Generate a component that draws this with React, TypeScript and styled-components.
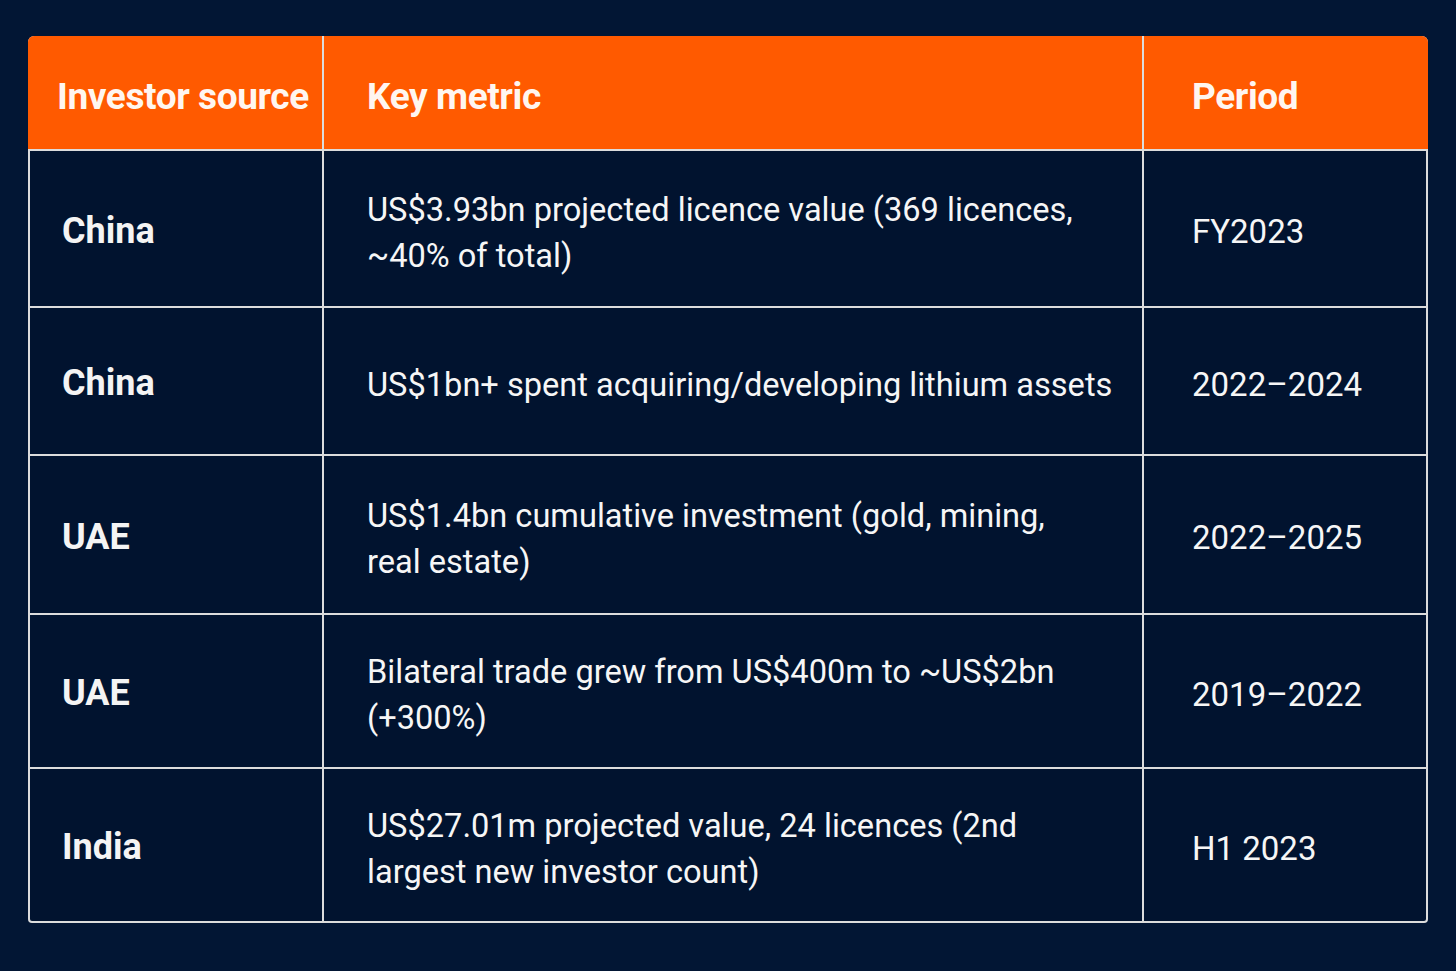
import React from "react"
import styled, { createGlobalStyle } from "styled-components"

const GlobalStyle = createGlobalStyle`
  html, body {
    margin: 0;
    padding: 0;
    background: #021634;
  }
  body {
    font-family: Roboto, "Liberation Sans", Arial, sans-serif;
    color: #f7f7f7;
  }
`

const LINE = "#dcdcdc"
const COLUMNS = "294px 818px 284px"

const Page = styled.div`
  width: 1456px;
  height: 971px;
  padding: 36px 28px 0;
  box-sizing: border-box;
`

const Table = styled.div`
  width: 1400px;
  display: flex;
  flex-direction: column;
`

const HeaderRow = styled.div`
  display: grid;
  grid-template-columns: ${COLUMNS};
  column-gap: 2px;
  height: 113px;
  background: ${LINE};
  border-radius: 6px 6px 0 0;
  overflow: hidden;
`

const HeaderCell = styled.div<{ $pad: number }>`
  background: #ff5a00;
  display: flex;
  align-items: center;
  padding-left: ${(p) => p.$pad}px;
  padding-top: 8px;
  box-sizing: border-box;
  font-size: 37px;
  font-weight: 700;
  letter-spacing: -0.4px;
  color: #fff6f0;
  white-space: nowrap;
`

const Body = styled.div`
  display: grid;
  grid-template-columns: 292px 818px 284px;
  grid-template-rows: 155px 146px 157px 152px 152px;
  gap: 2px;
  padding-top: 2px;
  background: ${LINE};
  border: 2px solid ${LINE};
  border-top: none;
  border-radius: 0 0 4px 4px;
  overflow: hidden;
`

const Cell = styled.div<{ $pad: number }>`
  background: #01132f;
  display: flex;
  align-items: center;
  padding-left: ${(p) => p.$pad}px;
  box-sizing: border-box;
`

const Source = styled.span`
  font-size: 36px;
  font-weight: 700;
  color: #f4f4f4;
  margin-top: 4px;
`

const Metric = styled.span`
  font-size: 32.6px;
  line-height: 46px;
  color: #f6f6f6;
  margin-top: 8px;
  white-space: nowrap;
`

const Period = styled.span`
  font-size: 33px;
  color: #f6f6f6;
  margin-top: 6px;
`

const rows = [
  {
    source: "China",
    metric: ["US$3.93bn projected licence value (369 licences,", "~40% of total)"],
    period: "FY2023",
  },
  {
    source: "China",
    metric: ["US$1bn+ spent acquiring/developing lithium assets"],
    period: "2022–2024",
  },
  {
    source: "UAE",
    metric: ["US$1.4bn cumulative investment (gold, mining,", "real estate)"],
    period: "2022–2025",
  },
  {
    source: "UAE",
    metric: ["Bilateral trade grew from US$400m to ~US$2bn", "(+300%)"],
    period: "2019–2022",
  },
  {
    source: "India",
    metric: ["US$27.01m projected value, 24 licences (2nd", "largest new investor count)"],
    period: "H1 2023",
  },
]

export default function App() {
  return (
    <>
      <GlobalStyle />
      <Page>
        <Table>
          <HeaderRow>
            <HeaderCell $pad={29}>Investor source</HeaderCell>
            <HeaderCell $pad={43}>Key metric</HeaderCell>
            <HeaderCell $pad={48}>Period</HeaderCell>
          </HeaderRow>
          <Body>
            {rows.map((r, i) => (
              <React.Fragment key={i}>
                <Cell $pad={32}>
                  <Source>{r.source}</Source>
                </Cell>
                <Cell $pad={43}>
                  <Metric>
                    {r.metric.map((line, j) => (
                      <React.Fragment key={j}>
                        {j > 0 && <br />}
                        {line}
                      </React.Fragment>
                    ))}
                  </Metric>
                </Cell>
                <Cell $pad={48}>
                  <Period>{r.period}</Period>
                </Cell>
              </React.Fragment>
            ))}
          </Body>
        </Table>
      </Page>
    </>
  )
}
